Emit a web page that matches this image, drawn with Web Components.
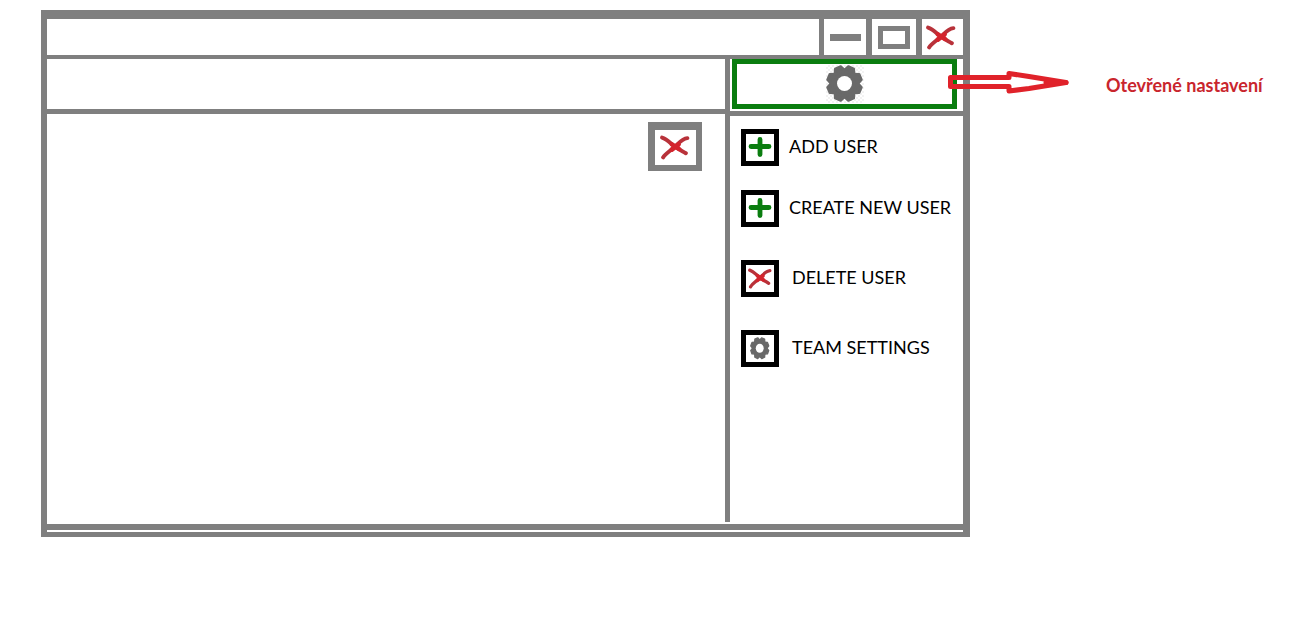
<!DOCTYPE html>
<html lang="cs">
<head>
<meta charset="utf-8">
<title>Nastavení</title>
<style>
  body { margin: 0; background: #fff; font-family: Lato, "Noto Sans", sans-serif; font-size: 18px; line-height: 24px; color: #000; }
</style>
</head>
<body>
<wire-page></wire-page>

<template id="wire-page">
  <style>
    :host { display: flex; align-items: stretch; box-sizing: border-box; min-height: 100vh; padding: 10px 0 86px 41px; }
    wire-window { flex: 1; min-width: 0; }
    wire-callout { flex: none; width: 366px; margin-left: -22px; }
    nav { display: flex; flex-direction: column; gap: 33px; padding: 13px 0 0 11px; }
    .group { display: flex; flex-direction: column; gap: 33px; --label-gap: 13px; }
    .people { gap: 24px; --label-gap: 10px; }
  </style>
  <wire-window>
    <nav slot="side" aria-label="Settings">
      <div class="group people">
        <wire-action icon="plus">ADD USER</wire-action>
        <wire-action icon="plus">CREATE NEW USER</wire-action>
      </div>
      <div class="group">
        <wire-action icon="cross">DELETE USER</wire-action>
        <wire-action icon="gear">TEAM SETTINGS</wire-action>
      </div>
    </nav>
  </wire-window>
  <wire-callout>Otevřené nastavení</wire-callout>
</template>

<template id="wire-window">
  <style>
    :host { display: flex; flex-direction: column; box-sizing: border-box; border: solid #7f7f7f; border-width: 9px 7px 5px 6px; }
    button { display: flex; align-items: center; justify-content: center; box-sizing: border-box; margin: 0; padding: 0; border: 0 solid #7f7f7f; background: #fff; color: inherit; }
    header { display: flex; justify-content: flex-end; height: 36px; }
    header button { width: 50px; border-left-width: 6px; }
    header button.min { width: 47px; border-left-width: 5px; }
    header button.close { width: 47px; padding-right: 3px; }
    .min i { width: 31px; height: 7px; background: #7f7f7f; }
    .max i { box-sizing: border-box; width: 32px; height: 23px; border: 5px solid #7f7f7f; }
    .body { flex: 1; display: grid; grid-template-columns: minmax(0, 1fr) 238px; }
    main { display: flex; flex-direction: column; }
    .bar { height: 49px; }
    .panel { display: flex; justify-content: flex-end; padding: 8px 23px 0 0; }
    .panel button { width: 54px; height: 49px; border-width: 8px 6px 6px 7px; padding-right: 2px; }
    aside { border-left: 5px solid #7f7f7f; margin-bottom: 2px; }
    .tab { box-sizing: border-box; height: 57px; padding: 0 6px 2px 2px; border-bottom: 5px solid #7f7f7f; }
    .tab button { width: 100%; height: 50px; border: 5px solid #0a7d0f; }
    .gear { width: 38px; height: 38px; background: repeating-conic-gradient(#f2f2f2 0 25%, #fff 0 50%) 0 0 / 4px 4px; }
    wire-icon { width: 30px; height: 25px; }
    .gear wire-icon { width: 38px; height: 38px; }
    .gap { height: 2px; }
  </style>
  <header>
    <button class="min" aria-label="Minimize"><i></i></button>
    <button class="max" aria-label="Maximize"><i></i></button>
    <button class="close" aria-label="Close"><wire-icon name="cross"></wire-icon></button>
  </header>
  <wire-rule style="--split: 66%; --h: 4px; --first: 5px"></wire-rule>
  <div class="body">
    <main>
      <div class="bar"></div>
      <wire-rule style="--split: 51%; --h: 6px; --first: 5px; --second: 5px; --align: flex-end"></wire-rule>
      <div class="panel">
        <button aria-label="Close panel"><wire-icon name="cross"></wire-icon></button>
      </div>
    </main>
    <aside>
      <div class="tab"><button aria-label="Settings"><span class="gear"><wire-icon name="gear"></wire-icon></span></button></div>
      <slot name="side"></slot>
    </aside>
  </div>
  <wire-rule style="--split: 84%; --h: 6px; --first: 5px; --second: 6px"></wire-rule>
  <div class="gap"></div>
</template>

<template id="wire-rule">
  <style>
    :host { display: flex; flex: none; height: var(--h); }
    i { background: #7f7f7f; }
    i:first-child { width: var(--split); height: var(--first, 100%); }
    i:last-child { flex: 1; height: var(--second, 100%); align-self: var(--align, flex-start); }
  </style>
  <i></i><i></i>
</template>

<template id="wire-action">
  <style>
    :host { display: block; }
    button { display: flex; align-items: center; gap: var(--label-gap); padding: 0; border: 0; background: none; font: inherit; color: inherit; white-space: nowrap; }
    .box { box-sizing: border-box; width: 38px; height: 37px; border: 5px solid #000; display: flex; align-items: center; justify-content: center; }
    .label { padding-bottom: 3px; }
    wire-icon { width: 24px; height: 21px; }
    wire-icon[name="gear"] { width: 20px; height: 23px; }
  </style>
  <button><span class="box"><wire-icon></wire-icon></span><span class="label"><slot></slot></span></button>
</template>

<template id="wire-callout">
  <style>
    :host { display: flex; align-items: flex-start; gap: 36px; box-sizing: border-box; padding-top: 60px; z-index: 1; font-weight: 700; color: #c9252d; white-space: nowrap; }
    svg { flex: none; display: block; }
    span { padding-top: 3px; }
  </style>
  <svg width="122" height="26" viewBox="0 0 122 26" fill="none" stroke="#e0222a" stroke-width="5" stroke-linejoin="round" aria-hidden="true">
    <path d="M2.500 7.500H61V3.500L81 6.500L118 12.500L81 18.500L61 21V16.500H2.500Z"/>
    <path d="M98 12.500H118" stroke-linecap="round"/>
  </svg>
  <span><slot></slot></span>
</template>

<script>
  const ICONS = {
    cross: `<svg viewBox="0 0 29 24" preserveAspectRatio="none" fill="none" stroke="#b8323a" stroke-width="3.800" stroke-linecap="round">
      <path d="M2 2.500C7 4 10 8 15 11.500S22 15.500 25 17.500M26.500 3C21 3.500 18 8 13.500 12S5 18 3 21.500"/>
      <path d="M11.500 9L18.500 13.500M18 9L11.500 14" stroke="#d4242d" stroke-width="4.400"/></svg>`,
    plus: `<svg viewBox="0 0 24 21" fill="none" stroke="#0a7d0f" stroke-width="4.800" stroke-linecap="round">
      <path d="M3 9.500H21M12 2.500V17.500"/></svg>`,
    gear: `<svg viewBox="-18.500 -18.500 38 38" preserveAspectRatio="none" fill="#696969" stroke="#696969" stroke-linejoin="round" stroke-width="2.400">
      <circle r="13.500"/>${[0, 1, 2, 3, 4, 5, 6, 7].map(n =>
        `<path transform="rotate(${22.5 + 45 * n})" d="M-5.500 -12L-3 -17.200H3L5.500 -12Z"/>`).join('')}
      <circle r="7.500" fill="#fff" stroke="none"/></svg>`
  };

  class WireElement extends HTMLElement {
    constructor() {
      super();
      const source = document.getElementById(this.localName);
      this.attachShadow({ mode: 'open' }).append(source.content.cloneNode(true));
    }
  }

  class WireIcon extends HTMLElement {
    static observedAttributes = ['name'];
    constructor() {
      super();
      this.attachShadow({ mode: 'open' });
    }
    attributeChangedCallback(_, __, name) {
      this.shadowRoot.innerHTML =
        `<style>:host { display: block; } svg { display: block; width: 100%; height: 100%; }</style>${ICONS[name]}`;
    }
  }

  class WireAction extends WireElement {
    connectedCallback() {
      this.shadowRoot.querySelector('wire-icon').setAttribute('name', this.getAttribute('icon'));
    }
  }

  customElements.define('wire-icon', WireIcon);
  customElements.define('wire-rule', class extends WireElement {});
  customElements.define('wire-action', WireAction);
  customElements.define('wire-callout', class extends WireElement {});
  customElements.define('wire-window', class extends WireElement {});
  customElements.define('wire-page', class extends WireElement {});
</script>
</body>
</html>
